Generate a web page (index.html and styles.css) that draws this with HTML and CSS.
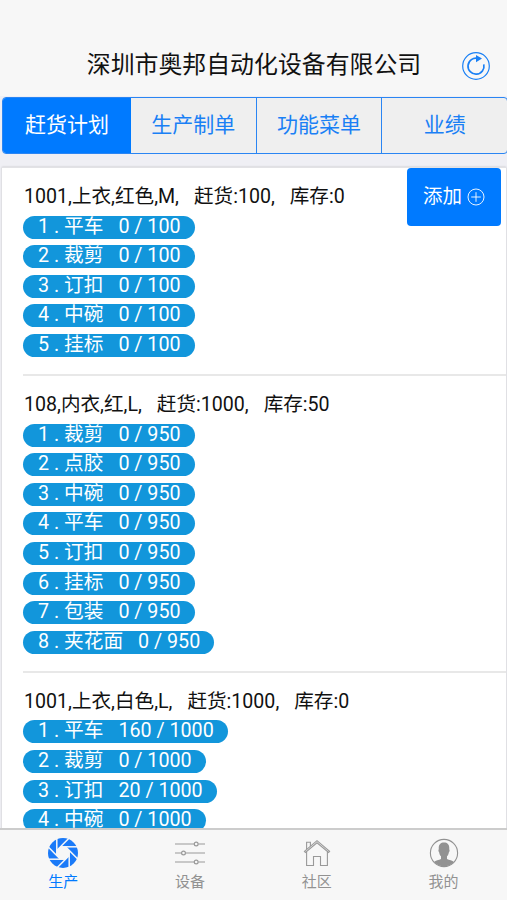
FILE: index.html
```html
<!DOCTYPE html>
<html lang="zh-CN">
<head>
    <meta charset="UTF-8">
    <meta name="viewport" content="width=device-width, initial-scale=1.0">
    <title>深圳市奥邦自动化设备有限公司</title>
    <link rel="stylesheet" href="styles.css">
</head>
<body>
    <header class="bar">
        <h1 class="title">深圳市奥邦自动化设备有限公司</h1>
        <svg class="refresh" viewBox="0 0 28 28" fill="none" stroke="#1a80f5">
            <circle cx="14" cy="14" r="13.3" stroke-width="1.2"/>
            <path d="M16 6.4A8 8 0 1 0 21.8 12.4" stroke-width="1.7"/>
            <path d="M14 3L20 6.6L14 10.3Z" fill="#1a80f5" stroke="none"/>
        </svg>
    </header>

    <nav class="segments">
        <a class="segment active">赶货计划</a>
        <a class="segment">生产制单</a>
        <a class="segment">功能菜单</a>
        <a class="segment">业绩</a>
    </nav>

    <main class="content">
        <div class="card">
            <button class="add-btn">添加
                <svg class="plus" viewBox="0 0 18 18" fill="none" stroke="#fff" stroke-width="0.9">
                    <circle cx="9" cy="9" r="8"/>
                    <path d="M9 4.2V13.8M4.2 9H13.8"/>
                </svg>
            </button>
            <section class="plan">
                <h2 class="plan-title"><span>1001,上衣,红色,M,</span><span>赶货:100,</span><span>库存:0</span></h2>
                <ul class="steps">
                    <li class="step"><span>1 . 平车</span><span>0 / 100</span></li>
                    <li class="step"><span>2 . 裁剪</span><span>0 / 100</span></li>
                    <li class="step"><span>3 . 订扣</span><span>0 / 100</span></li>
                    <li class="step"><span>4 . 中碗</span><span>0 / 100</span></li>
                    <li class="step"><span>5 . 挂标</span><span>0 / 100</span></li>
                </ul>
            </section>
            <section class="plan">
                <h2 class="plan-title"><span>108,内衣,红,L,</span><span>赶货:1000,</span><span>库存:50</span></h2>
                <ul class="steps">
                    <li class="step"><span>1 . 裁剪</span><span>0 / 950</span></li>
                    <li class="step"><span>2 . 点胶</span><span>0 / 950</span></li>
                    <li class="step"><span>3 . 中碗</span><span>0 / 950</span></li>
                    <li class="step"><span>4 . 平车</span><span>0 / 950</span></li>
                    <li class="step"><span>5 . 订扣</span><span>0 / 950</span></li>
                    <li class="step"><span>6 . 挂标</span><span>0 / 950</span></li>
                    <li class="step"><span>7 . 包装</span><span>0 / 950</span></li>
                    <li class="step"><span>8 . 夹花面</span><span>0 / 950</span></li>
                </ul>
            </section>
            <section class="plan">
                <h2 class="plan-title"><span>1001,上衣,白色,L,</span><span>赶货:1000,</span><span>库存:0</span></h2>
                <ul class="steps">
                    <li class="step"><span>1 . 平车</span><span>160 / 1000</span></li>
                    <li class="step"><span>2 . 裁剪</span><span>0 / 1000</span></li>
                    <li class="step"><span>3 . 订扣</span><span>20 / 1000</span></li>
                    <li class="step"><span>4 . 中碗</span><span>0 / 1000</span></li>
                </ul>
            </section>
        </div>
    </main>

    <footer class="tabs">
        <a class="tab active">
            <svg class="tab-icon" viewBox="0 0 32 32">
                <defs>
                    <path id="slit" d="M13.4 9.8H32"/>
                </defs>
                <circle cx="16" cy="16" r="15" fill="#1a7af8"/>
                <path d="M13.3 9.5H18.7L22.5 13.3V18.7L18.7 22.5H13.3L9.5 18.7V13.3Z" fill="#f7f7f7"/>
                <g stroke="#f7f7f7" stroke-width="1.5">
                    <use href="#slit"/>
                    <use href="#slit" transform="rotate(45 16 16)"/>
                    <use href="#slit" transform="rotate(90 16 16)"/>
                    <use href="#slit" transform="rotate(135 16 16)"/>
                    <use href="#slit" transform="rotate(180 16 16)"/>
                    <use href="#slit" transform="rotate(225 16 16)"/>
                    <use href="#slit" transform="rotate(270 16 16)"/>
                    <use href="#slit" transform="rotate(315 16 16)"/>
                </g>
            </svg>
            <span>生产</span>
        </a>
        <a class="tab">
            <svg class="tab-icon" viewBox="0 0 32 32" fill="none" stroke="#999" stroke-width="1.2">
                <path d="M1 7H20M24.4 7H31M1 16H7.3M11.7 16H31M1 25H20M24.4 25H31"/>
                <circle cx="22.2" cy="7" r="1.9"/>
                <circle cx="9.5" cy="16" r="1.9"/>
                <circle cx="22.2" cy="25" r="1.9"/>
            </svg>
            <span>设备</span>
        </a>
        <a class="tab">
            <svg class="tab-icon" viewBox="0 0 32 32" fill="none" stroke="#999" stroke-width="1.1">
                <path d="M3.4 14.3L16 3.6L28.6 14.3L27.6 15.5L16 5.8L4.4 15.5Z"/>
                <path d="M5.6 14.6V28.5H12.5V19.5H19.5V28.5H26.4V14.6"/>
                <path d="M5.6 12.2V5.3H9.4V9"/>
            </svg>
            <span>社区</span>
        </a>
        <a class="tab">
            <svg class="tab-icon" viewBox="0 0 32 32">
                <circle cx="16" cy="16" r="13.6" fill="none" stroke="#929292" stroke-width="1.1"/>
                <path fill="#929292" d="M6 25C7.5 23.6 11 23 13 22.1V19.2C11.8 18 11.4 16.8 11.2 15.4C10.3 14.8 10.2 12.8 10.8 12.3C10.3 8 12.3 5.6 16 5.6S21.7 8 21.2 12.3C21.8 12.8 21.7 14.8 20.8 15.4C20.6 16.8 20.2 18 19 19.2V22.1C21 23 24.5 23.6 26 25A13.6 13.6 0 0 1 6 25Z"/>
            </svg>
            <span>我的</span>
        </a>
    </footer>
</body>
</html>
```
FILE: styles.css
```css
* {
    box-sizing: border-box;
}
body {
    margin: 0;
    height: 900px;
    display: flex;
    flex-direction: column;
    overflow: hidden;
    background-color: #efeff4;
    font-family: Roboto, "Noto Sans CJK SC", sans-serif;
    color: #111;
}
.bar {
    flex: none;
    height: 96px;
    padding: 36px 17px 0 0;
    display: flex;
    align-items: center;
    background-color: #f7f7f7;
}
.title {
    flex: 1;
    margin: 0;
    padding: 0 0 3px 46px;
    text-align: center;
    font-size: 23.9px;
    font-weight: normal;
    line-height: 56px;
}
.refresh {
    flex: none;
    width: 28px;
    height: 28px;
}
.segments {
    flex: none;
    display: flex;
    height: 57px;
    margin: 1px -1px 0 2px;
    border: 1px solid #2a85f3;
    border-radius: 4px;
    background-color: #efefef;
    overflow: hidden;
}
.segment {
    flex: 1;
    text-align: center;
    font-size: 21px;
    line-height: 55px;
    color: #1a80f5;
}
.segment.active {
    flex: 0 0 128px;
    background-color: #007aff;
    color: #fff;
}
.segment + .segment + .segment {
    border-left: 1px solid #2a85f3;
}
.content {
    flex: 1;
    min-height: 0;
    padding: 13px 1px 0 2px;
    overflow: hidden;
}
.card {
    position: relative;
    height: 900px;
    padding-left: 21px;
    background-color: #fff;
    border-top: 1px solid #e2e2e5;
    box-shadow: 0 0 2px rgba(0, 0, 0, 0.2);
}
/* floats over the first plan */
.add-btn {
    position: absolute;
    top: 0;
    right: 5px;
    width: 94px;
    height: 58px;
    padding: 0 0 5px;
    display: flex;
    align-items: center;
    justify-content: center;
    gap: 5px;
    border: none;
    border-radius: 4px;
    background-color: #007aff;
    color: #fff;
    font-family: inherit;
    font-size: 19.5px;
}
.plus {
    width: 18px;
    height: 18px;
    margin-top: 4px;
}
.plan {
    padding: 12px 0 17px;
    border-bottom: 2px solid #e8e8e8;
}
.plan-title {
    display: flex;
    gap: 15px;
    margin: 0 0 1px;
    padding-left: 1px;
    font-size: 19.6px;
    font-weight: normal;
    line-height: 34.6px;
    white-space: nowrap;
}
.steps {
    display: flex;
    flex-direction: column;
    align-items: flex-start;
    gap: 6.6px;
    margin: 0;
    padding: 0;
    list-style: none;
}
.step {
    display: flex;
    gap: 15px;
    height: 23px;
    padding: 0 14px 0 15px;
    border-radius: 12px;
    background-color: #1296db;
    color: #fff;
    font-size: 19.7px;
    line-height: 21px;
    white-space: pre;
}
.tabs {
    flex: none;
    display: flex;
    height: 72px;
    padding-top: 7px;
    border-top: 2px solid #ccc;
    background-color: #f7f7f7;
}
.tab {
    flex: 1;
    display: flex;
    flex-direction: column;
    align-items: center;
    gap: 2px;
    font-size: 15px;
    line-height: 22px;
    color: #929292;
}
.tab.active {
    color: #007aff;
}
.tab-icon {
    width: 32px;
    height: 32px;
}
```
